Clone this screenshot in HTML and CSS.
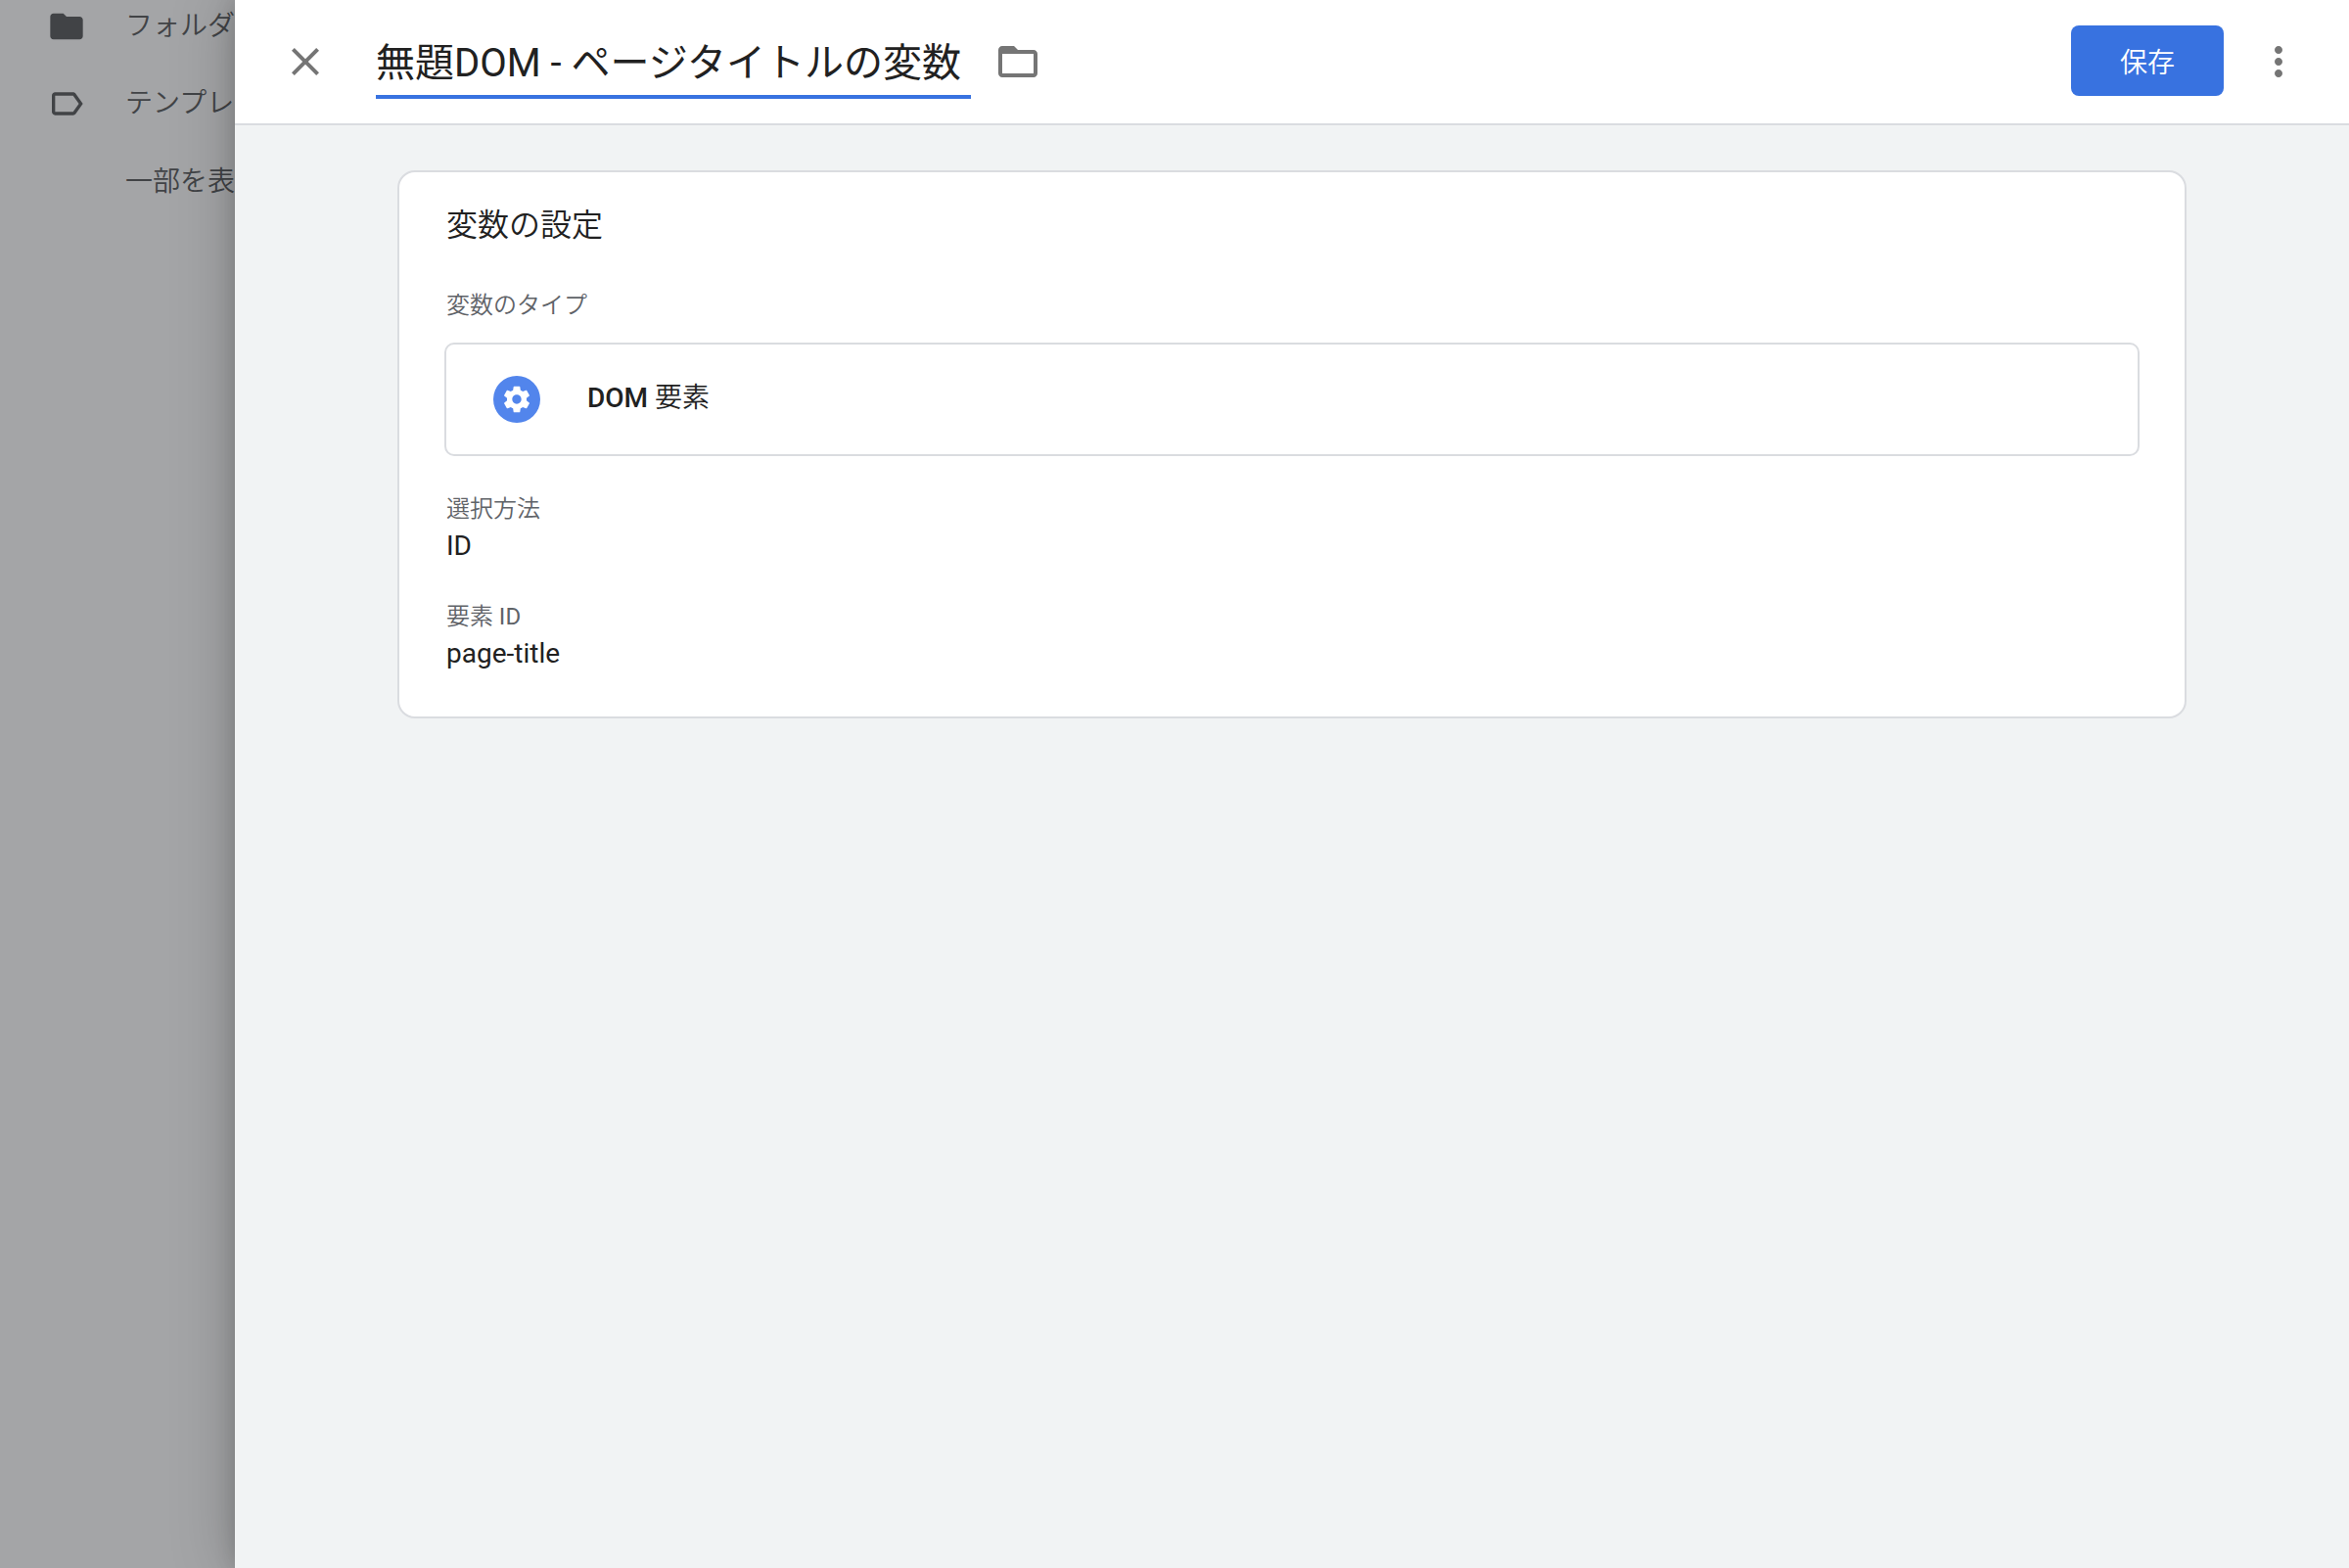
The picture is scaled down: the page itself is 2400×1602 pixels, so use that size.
FILE: index.html
```html
<!DOCTYPE html>
<html lang="ja">
<head>
<meta charset="utf-8">
<title>変数の設定</title>
<link rel="stylesheet" href="styles.css">
</head>
<body>
<div class="app">
  <nav class="sidebar">
    <a class="nav-item" href="#">
      <svg class="nav-icon" viewBox="0 0 24 24" aria-hidden="true"><path d="M10 4H4c-1.100 0-1.990.900-1.990 2L2 18c0 1.100.900 2 2 2h16c1.100 0 2-.900 2-2V8c0-1.100-.900-2-2-2h-8l-2-2z"/></svg>
      <span>フォルダ</span>
    </a>
    <a class="nav-item" href="#">
      <svg class="nav-icon" viewBox="0 0 24 24" aria-hidden="true"><path d="M17.630 5.840C17.270 5.330 16.670 5 16 5L5 5.010C3.900 5.010 3 5.900 3 7v10c0 1.100.900 1.990 2 1.990L16 19c.670 0 1.270-.330 1.630-.840L22 12l-4.370-6.160zM16 17H5V7h11l3.550 5L16 17z"/></svg>
      <span>テンプレ</span>
    </a>
    <a class="nav-item nav-item-plain" href="#"><span>一部を表</span></a>
  </nav>
  <main class="panel">
    <header class="panel-header">
      <button class="icon-button" type="button" aria-label="閉じる">
        <svg class="icon" viewBox="0 0 24 24"><path d="M19 6.410L17.590 5 12 10.590 6.410 5 5 6.410 10.590 12 5 17.590 6.410 19 12 13.410 17.590 19 19 17.590 13.410 12z"/></svg>
      </button>
      <input class="name-input" type="text" aria-label="変数名" value="無題DOM - ページタイトルの変数">
      <button class="icon-button folder-button" type="button" aria-label="フォルダに移動">
        <svg class="icon" viewBox="0 0 24 24"><path d="M20 6h-8l-2-2H4c-1.100 0-1.990.900-1.990 2L2 18c0 1.100.900 2 2 2h16c1.100 0 2-.900 2-2V8c0-1.100-.900-2-2-2zm0 12H4V8h16v10z"/></svg>
      </button>
      <button class="save-button" type="button">保存</button>
      <button class="icon-button" type="button" aria-label="その他の操作">
        <svg class="icon" viewBox="0 0 24 24"><path d="M12 8c1.100 0 2-.900 2-2s-.900-2-2-2-2 .900-2 2 .900 2 2 2zm0 2c-1.100 0-2 .900-2 2s.900 2 2 2 2-.900 2-2-.900-2-2-2zm0 6c-1.100 0-2 .900-2 2s.900 2 2 2 2-.900 2-2-.900-2-2-2z"/></svg>
      </button>
    </header>
    <div class="panel-body">
      <section class="card">
        <h2 class="card-title">変数の設定</h2>
        <p class="label">変数のタイプ</p>
        <button class="type-box" type="button">
          <span class="type-icon">
            <svg class="gear" viewBox="0 0 24 24" aria-hidden="true"><path d="M19.430 12.980c.040-.320.070-.640.070-.980s-.030-.660-.070-.980l2.110-1.650c.190-.150.240-.420.120-.640l-2-3.460c-.120-.220-.390-.300-.610-.220l-2.490 1c-.520-.400-1.080-.730-1.690-.980l-.380-2.650C14.460 2.180 14.250 2 14 2h-4c-.250 0-.460.180-.490.420l-.380 2.650c-.610.250-1.170.590-1.690.980l-2.490-1c-.230-.090-.490 0-.610.220l-2 3.460c-.130.220-.070.490.120.640l2.110 1.650c-.040.320-.070.650-.070.980s.030.660.070.980l-2.110 1.650c-.190.150-.240.420-.120.640l2 3.460c.120.220.390.300.610.220l2.490-1c.520.400 1.080.730 1.690.980l.380 2.650c.030.240.240.420.490.420h4c.250 0 .460-.180.490-.420l.380-2.650c.610-.250 1.170-.590 1.690-.980l2.490 1c.230.090.490 0 .610-.220l2-3.460c.120-.220.070-.490-.120-.640l-2.110-1.650zM12 15.500c-1.930 0-3.500-1.570-3.500-3.500s1.570-3.500 3.500-3.500 3.500 1.570 3.500 3.500-1.570 3.500-3.500 3.500z"/></svg>
          </span>
          <span class="type-name"><b class="latin">DOM</b> 要素</span>
        </button>
        <dl class="fields">
          <div class="field">
            <dt class="label">選択方法</dt>
            <dd class="value">ID</dd>
          </div>
          <div class="field">
            <dt class="label">要素 <span class="label-latin">ID</span></dt>
            <dd class="value">page-title</dd>
          </div>
        </dl>
      </section>
    </div>
  </main>
</div>
</body>
</html>
```
FILE: styles.css
```css
* {
  box-sizing: border-box;
}

body,
h2,
p,
dl,
dd {
  margin: 0;
}

body {
  font-family: Roboto, "Noto Sans CJK JP", sans-serif;
  font-size: 28px;
  color: #212121;
}

button,
input {
  font: inherit;
  color: inherit;
  border: 0;
  padding: 0;
  background: none;
}

.app {
  display: grid;
  grid-template-columns: 240px minmax(0, 1fr);
  min-height: 100vh;
  overflow: hidden;
}

.sidebar {
  display: flex;
  flex-direction: column;
  overflow: hidden;
  padding-left: 48px;
  background: #a4a5a7;
}

.nav-item {
  display: flex;
  align-items: center;
  gap: 40px;
  height: 80px;
  color: #414346;
  font-weight: 350;
  line-height: 40px;
  white-space: nowrap;
  text-decoration: none;
}

.nav-item:first-child {
  height: 66px;
  padding-bottom: 12px;
}

.nav-item-plain {
  padding-left: 80px;
}

.nav-icon {
  flex: none;
  width: 40px;
  height: 40px;
  fill: currentColor;
}

.panel {
  position: relative;
  background: #f1f3f4;
  box-shadow: 0 0 20px rgba(0, 0, 0, 0.16), 0 0 60px 4px rgba(0, 0, 0, 0.2);
}

.panel-header {
  display: flex;
  align-items: center;
  height: 128px;
  padding: 0 48px;
  background: #fff;
  border-bottom: 2px solid #dadce0;
}

.icon-button {
  flex: none;
  display: flex;
}

.icon {
  width: 48px;
  height: 48px;
  fill: #757575;
}

.name-input {
  width: 608px;
  height: 76px;
  margin: 0 24px 0 48px;
  border-bottom: 4px solid #3872e0;
  outline: 0;
  font-size: 40px;
}

.folder-button {
  margin-right: auto;
}

.save-button {
  height: 72px;
  margin-right: 32px;
  margin-bottom: 2px;
  padding: 0 50px;
  border-radius: 8px;
  background: #3872e0;
  color: #fff;
  font-weight: 350;
}

.panel-body {
  padding: 46px 166px;
}

.card {
  padding: 30px 46px 44px;
  background: #fff;
  border: 2px solid #dadce0;
  border-radius: 18px;
}

.card-title {
  margin-bottom: 42px;
  padding: 0 2px;
  font-size: 32px;
  font-weight: 350;
  line-height: 48px;
}

.label {
  padding: 0 2px;
  color: #5f6368;
  font-size: 24px;
  font-weight: 350;
  line-height: 32px;
}

.label-latin {
  font-weight: 400;
}

.type-box {
  display: flex;
  align-items: center;
  gap: 48px;
  width: 100%;
  height: 116px;
  margin-top: 22px;
  padding: 0 48px;
  border: 2px solid #dadce0;
  border-radius: 10px;
  text-align: left;
}

.type-icon {
  display: grid;
  place-items: center;
  width: 48px;
  height: 48px;
  border-radius: 50%;
  background: #5285ec;
}

.gear {
  width: 32px;
  height: 32px;
  fill: #fff;
}

.type-name {
  padding-bottom: 8px;
  font-weight: 350;
}

.latin {
  font-weight: 500;
}

.fields {
  display: grid;
  gap: 36px;
  padding-top: 38px;
}

.value {
  margin-top: 2px;
  padding: 0 2px;
  line-height: 40px;
}
```
